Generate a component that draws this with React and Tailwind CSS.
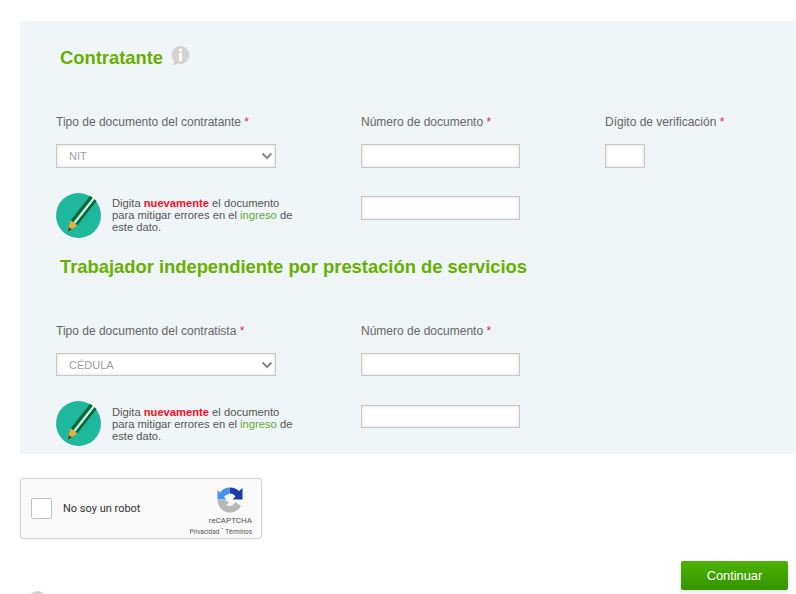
const arial = "font-['Liberation_Sans',Arial,sans-serif]";

function Req() {
  return <span className="text-[#e8274b]"> *</span>;
}

function Field({ className = "", w = "w-[159px]", h = "h-6" }) {
  return (
    <input
      className={`${w} ${h} block bg-white border border-[#c8c8c8] shadow-[inset_0_0_4px_rgba(0,0,0,0.12)] ${className}`}
    />
  );
}

function Select({ value, h, pad }) {
  return (
    <div className={`relative w-[220px] ${h}`}>
      <select
        defaultValue={value}
        className={`block appearance-none w-full h-full bg-white border border-[#c8c8c8] shadow-[inset_0_0_4px_rgba(0,0,0,0.12)] pl-3 text-[11px] text-[#a0a0a0] ${pad}`}
      >
        <option>{value}</option>
      </select>
      <svg className="absolute right-[3px] top-[8px]" width="12" height="8" viewBox="0 0 12 8" fill="none">
        <path d="M1.5 1.5 L6 6 L10.5 1.5" stroke="#888" strokeWidth="2" />
      </svg>
    </div>
  );
}

function Pencil() {
  return (
    <svg width="45" height="45" viewBox="0 0 45 45" className="shrink-0">
      <circle cx="22.5" cy="22.5" r="22.5" fill="#1fb89a" />
      <path d="M16 28.3 L35.3 3.7" stroke="#0b6a3a" strokeWidth="3.2" />
      <path d="M20.2 31.7 L39.5 7.1" stroke="#0b6a3a" strokeWidth="2.8" />
      <path d="M18.3 30.2 L37.6 5.6" stroke="#e6f0e6" strokeWidth="1.9" />
      <path d="M14.5 27.2 L21.6 32.8 L12 38 Z" fill="#f5a93b" />
      <path d="M12.8 34.2 L15.8 36.2 L12 38.5 Z" fill="#3a3a3a" />
    </svg>
  );
}

function Hint({ textTop }) {
  return (
    <div className="flex items-center">
      <Pencil />
      <p className={`ml-[11px] w-[184px] text-[11.2px] leading-3 text-[#555555] ${textTop}`}>
        Digita <span className="text-[#ff0d1f] font-bold">nuevamente</span> el documento<br />
        para mitigar errores en el <span className="text-[#62ab35]">ingreso</span> de<br />
        este dato.
      </p>
    </div>
  );
}

function InfoIcon({ className = "" }) {
  return (
    <svg width="19" height="20" viewBox="0 0 19 20" className={className}>
      <circle cx="9.5" cy="9" r="9" fill="#d2d2d2" />
      <path d="M3 14 L2.5 19.5 L8 17 Z" fill="#d2d2d2" />
      <circle cx="9.5" cy="4.2" r="1.6" fill="#fff" />
      <rect x="8" y="7" width="3" height="8" fill="#fff" />
    </svg>
  );
}

function Section({ title, label, third, value, icon, rowH, inputTop, textTop, pad }) {
  return (
    <section>
      <div className="flex items-center pl-1">
        <h2 className="text-[18.4px] tracking-[-0.02px] font-bold leading-5 text-[#66b000]">{title}</h2>
        {icon && <InfoIcon className="ml-2 -mt-[5px]" />}
      </div>
      <div className="grid grid-cols-[305px_244px_1fr] mt-[47px] text-xs leading-[14px] text-[#666666]">
        <label>{label}<Req /></label>
        <label>Número de documento<Req /></label>
        {third ? <label>{third}<Req /></label> : <span />}
      </div>
      <div className="grid grid-cols-[305px_244px_1fr] mt-[15px]">
        <Select value={value} h={rowH} pad={pad} />
        <Field h={rowH} />
        {third ? <Field w="w-10" /> : <span />}
      </div>
      <div className="grid grid-cols-[305px_1fr] mt-[25px] items-start">
        <Hint textTop={textTop} />
        <Field className={inputTop} h={rowH} />
      </div>
    </section>
  );
}

function RecaptchaLogo() {
  return (
    <svg width="26" height="26" viewBox="0 0 26 26">
      <path d="M13 0.5 A12.5 12.5 0 0 0 3 5.5 L0.5 3 L0.5 12.5 L9.5 12.5 L7 10 A6.5 6.5 0 0 1 11 7.5 L13 6 Z" fill="#4a90f5" />
      <path d="M13 0.5 A12.5 12.5 0 0 1 22 4 L25.5 1 L25.5 12.5 L15.5 12.5 L18.5 9.5 A6.5 6.5 0 0 0 13 6.5 Z" fill="#1c3aa9" />
      <path d="M0.5 13 A12.5 12.5 0 0 0 24 19 L18.5 15 A6.5 6.5 0 0 1 9 18 L12 15.5 L8 13 Z" fill="#b8b8b8" />
    </svg>
  );
}

export default function App() {
  return (
    <div className={`h-[594px] w-[796px] overflow-hidden bg-white ${arial}`}>
      <div className="h-[21px]" />
      <div className="ml-5 h-[433px] bg-[#f0f5f8] pl-9 pt-[27px]">
        <Section title="Contratante" label="Tipo de documento del contratante" third="Dígito de verificación" value="NIT" icon rowH="h-6" inputTop="mt-[3px]" textTop="-mt-[2px]" pad="" />
        <div className="h-[19px]" />
        <Section title="Trabajador independiente por prestación de servicios" label="Tipo de documento del contratista" value="CÉDULA" rowH="h-[23px]" inputTop="mt-1" textTop="" pad="pt-px" />
      </div>
      <div className="ml-5 mt-6 w-[242px] h-[61px] bg-[#f9f9f9] border border-[#d6d6d6] rounded-[3px] shadow-[0_0_3px_rgba(0,0,0,0.08)] flex items-center pl-[10px] pr-[9px] font-['Roboto',sans-serif]">
        <span className="w-[21px] h-[21px] bg-white border border-[#c1c1c1] rounded-[2px] shrink-0" />
        <span className="ml-[11px] mt-px text-[11px] text-[#333333]">No soy un robot</span>
        <div className="ml-auto flex flex-col items-end pt-[6px]">
          <div className="mr-[9px]"><RecaptchaLogo /></div>
          <span className="text-[8px] leading-[10px] mt-[3px] text-[#555555]">reCAPTCHA</span>
          <span className="text-[6.4px] leading-[8px] mt-[2px] text-[#555555] whitespace-nowrap">Privacidad ˆ Términos</span>
        </div>
      </div>
      <div className="relative">
        <button className="absolute left-[681px] top-[22px] w-[107px] h-[29px] rounded-[2px] bg-gradient-to-b from-[#4cb300] to-[#339400] text-white text-[12.8px] shadow-[0_2px_4px_rgba(0,0,0,0.12)]">
          Continuar
        </button>
        <InfoIcon className="absolute left-[28px] top-[52px]" />
      </div>
    </div>
  );
}
